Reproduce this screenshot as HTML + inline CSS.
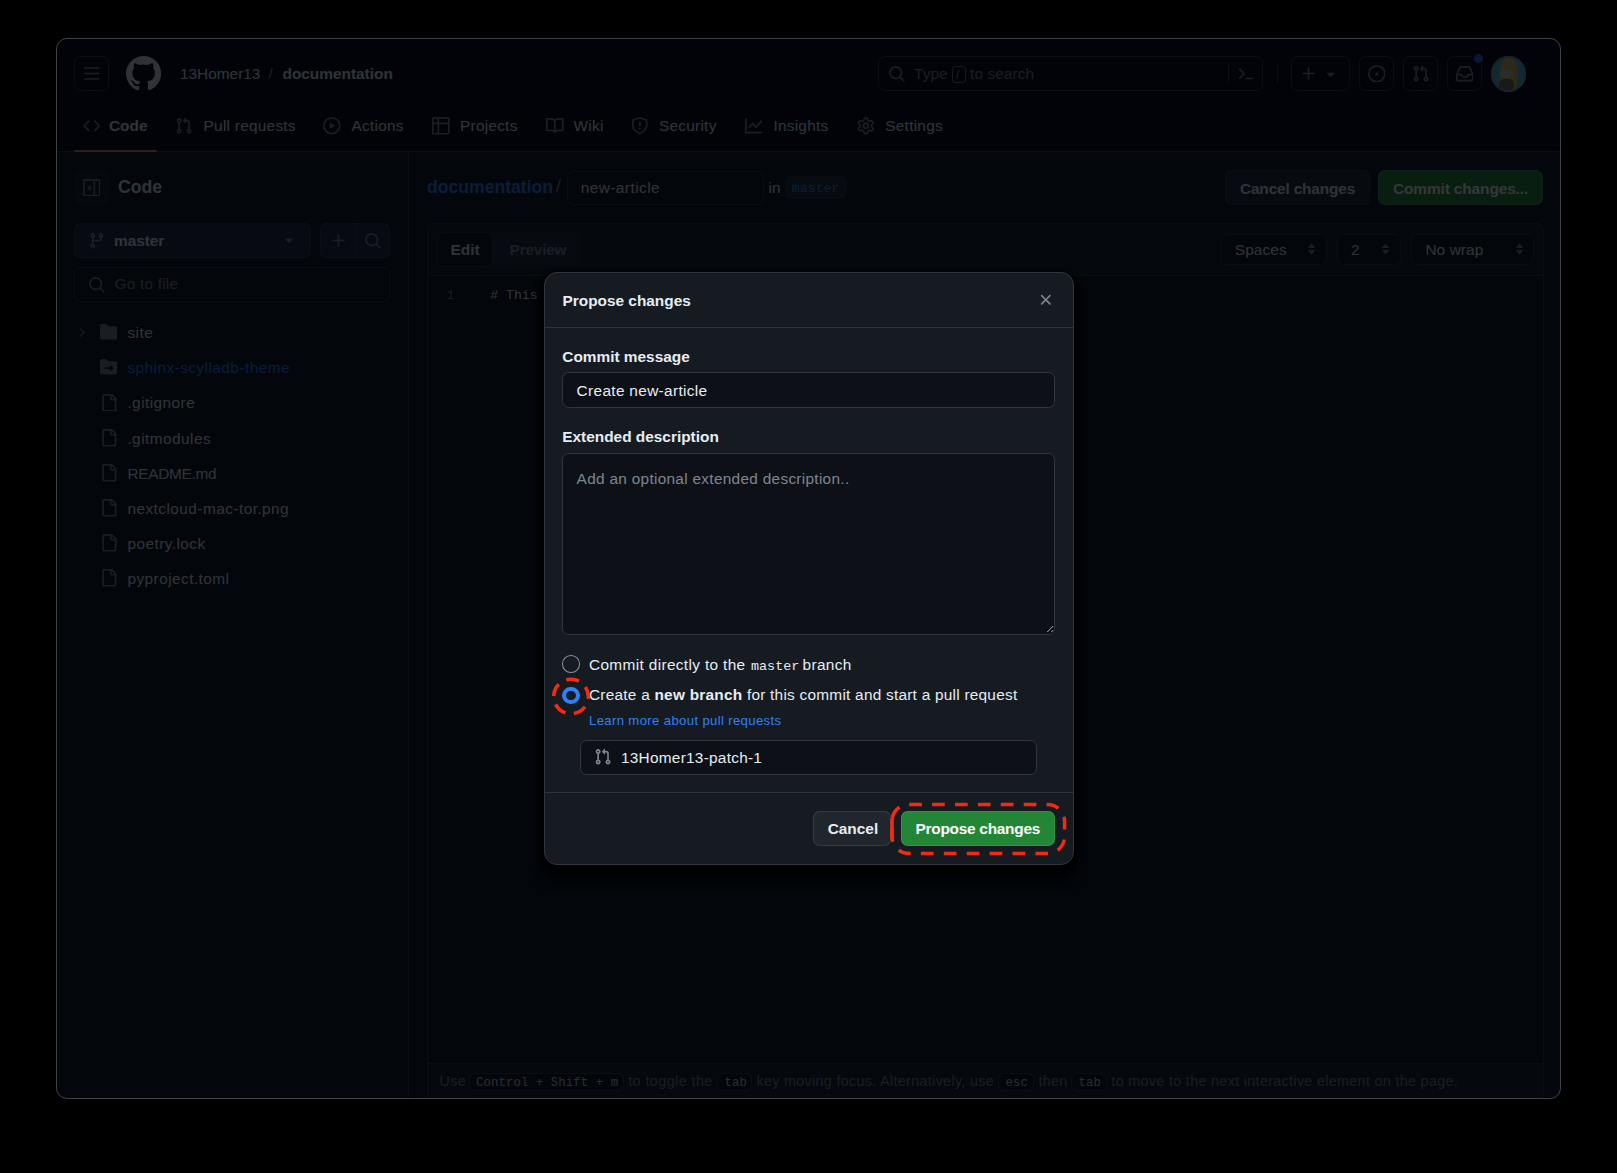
<!DOCTYPE html>
<html><head><meta charset="utf-8"><title>Propose changes</title>
<style>
*{box-sizing:border-box;margin:0;padding:0}
html,body{width:1617px;height:1173px;background:#000;overflow:hidden}
body{position:relative;font-family:"Liberation Sans",sans-serif;color:#e6edf3}
.a{position:absolute}
.t{position:absolute;white-space:nowrap;font-size:15.4px;line-height:15.4px}
.b{font-weight:bold}
.ic{position:absolute}
#page{position:absolute;left:0;top:0;width:1617px;height:1173px;clip-path:inset(38px 56px 74px 56px round 11px)}
#win{position:absolute;left:56px;top:38px;width:1505px;height:1061px;border:1px solid #404145;border-radius:11px}
#dim{position:absolute;left:0;top:0;width:1617px;height:1173px;background:rgba(1,4,9,.8)}
</style></head><body>
<div id="page">
<div class="a" style="left:56px;top:38px;width:1505px;height:113px;background:#010409;border-radius:0px;"></div>
<div class="a" style="left:56px;top:151px;width:1505px;height:1px;background:#30363d;border-radius:0px;"></div>
<div class="a" style="left:56px;top:152px;width:1505px;height:947px;background:#0d1117;border-radius:0px;"></div>
<div class="a" style="left:408px;top:152px;width:1px;height:947px;background:#30363d;border-radius:0px;"></div>
<div class="a" style="left:74px;top:56px;width:35px;height:35px;background:transparent;border:1px solid #30363d;border-radius:6.6px;"></div>
<svg class="ic" style="left:82.7px;top:64.7px;fill:#7d8590;" width="17.6" height="17.6" viewBox="0 0 16 16"><path d="M1 2.75A.75.75 0 0 1 1.75 2h12.5a.75.75 0 0 1 0 1.5H1.75A.75.75 0 0 1 1 2.75Zm0 5A.75.75 0 0 1 1.75 7h12.5a.75.75 0 0 1 0 1.5H1.75A.75.75 0 0 1 1 7.75ZM1.75 12h12.5a.75.75 0 0 1 0 1.5H1.75a.75.75 0 0 1 0-1.5Z"/></svg>
<svg class="ic" style="left:126px;top:56px;fill:#e6edf3;" width="35.2" height="35.2" viewBox="0 0 16 16"><path d="M8 0c4.42 0 8 3.58 8 8a8.013 8.013 0 0 1-5.45 7.59c-.4.08-.55-.17-.55-.38 0-.27.01-1.13.01-2.2 0-.75-.25-1.23-.54-1.48 1.78-.2 3.65-.88 3.65-3.95 0-.88-.31-1.59-.82-2.15.08-.2.36-1.02-.08-2.12 0 0-.67-.22-2.2.82-.64-.18-1.32-.27-2-.27-.68 0-1.36.09-2 .27-1.53-1.03-2.2-.82-2.2-.82-.44 1.1-.16 1.92-.08 2.12-.51.56-.82 1.28-.82 2.15 0 3.06 1.86 3.75 3.64 3.95-.23.2-.44.55-.51 1.07-.46.21-1.61.55-2.33-.66-.15-.24-.6-.83-1.23-.82-.67.01-.27.38.01.53.34.19.73.9.82 1.13.16.45.68 1.31 2.69.94 0 .67.01 1.3.01 1.49 0 .21-.15.45-.55.38A7.995 7.995 0 0 1 0 8c0-4.42 3.58-8 8-8Z"/></svg>
<div class="t " style="left:180px;top:66.06px;font-size:15.4px;line-height:15.4px;letter-spacing:0px;">13Homer13</div>
<div class="t " style="left:268.5px;top:66.06px;font-size:15.4px;line-height:15.4px;color:#7d8590;letter-spacing:0px;">/</div>
<div class="t b" style="left:282.5px;top:66.06px;font-size:15.4px;line-height:15.4px;">documentation</div>
<div class="a" style="left:878px;top:56px;width:385px;height:35px;background:transparent;border:1px solid #30363d;border-radius:6.6px;"></div>
<svg class="ic" style="left:887.5px;top:65px;fill:#7d8590;" width="17.6" height="17.6" viewBox="0 0 16 16"><path d="M10.68 11.74a6 6 0 0 1-7.922-8.982 6 6 0 0 1 8.982 7.922l3.04 3.04a.749.749 0 0 1-.326 1.275.749.749 0 0 1-.734-.215ZM11.5 7a4.499 4.499 0 1 0-8.997 0A4.499 4.499 0 0 0 11.5 7Z"/></svg>
<div class="t " style="left:914px;top:66.06px;font-size:15.4px;line-height:15.4px;color:#7d8590;letter-spacing:0.1px;">Type</div>
<div class="a" style="left:952px;top:66px;width:13.5px;height:17px;background:transparent;border:1px solid #7d8590;border-radius:3.3px;opacity:.9"></div>
<div class="t " style="left:955.8px;top:67.93px;font-size:13.2px;line-height:13.2px;color:#7d8590;letter-spacing:0px;">/</div>
<div class="t " style="left:970px;top:66.06px;font-size:15.4px;line-height:15.4px;color:#7d8590;letter-spacing:0.1px;">to search</div>
<div class="a" style="left:1228px;top:64px;width:1px;height:18px;background:#30363d;border-radius:0px;"></div>
<svg class="ic" style="left:1237px;top:65px" width="17.6" height="17.6" viewBox="0 0 16 16"><path d="M2.5 4 L6.5 8 L2.5 12" fill="none" stroke="#7d8590" stroke-width="1.5" stroke-linecap="round" stroke-linejoin="round"/><path d="M8.5 12.3 H14" stroke="#7d8590" stroke-width="1.5" stroke-linecap="round"/></svg>
<div class="a" style="left:1276.5px;top:62.5px;width:1px;height:20.5px;background:#30363d;border-radius:0px;"></div>
<div class="a" style="left:1291px;top:56px;width:58.5px;height:35px;background:transparent;border:1px solid #30363d;border-radius:6.6px;"></div>
<svg class="ic" style="left:1299.5px;top:64.7px;fill:#7d8590;" width="17.6" height="17.6" viewBox="0 0 16 16"><path d="M7.75 2a.75.75 0 0 1 .75.75V7h4.25a.75.75 0 0 1 0 1.5H8.5v4.25a.75.75 0 0 1-1.5 0V8.5H2.75a.75.75 0 0 1 0-1.5H7V2.75A.75.75 0 0 1 7.75 2Z"/></svg>
<svg class="ic" style="left:1322px;top:65px;fill:#7d8590;" width="17.6" height="17.6" viewBox="0 0 16 16"><path d="m4.427 7.427 3.396 3.396a.25.25 0 0 0 .354 0l3.396-3.396A.25.25 0 0 0 11.396 7H4.604a.25.25 0 0 0-.177.427Z"/></svg>
<div class="a" style="left:1359px;top:56px;width:35px;height:35px;background:transparent;border:1px solid #30363d;border-radius:6.6px;"></div>
<svg class="ic" style="left:1367.7px;top:64.7px;fill:#7d8590;" width="17.6" height="17.6" viewBox="0 0 16 16"><path d="M8 9.5a1.5 1.5 0 1 0 0-3 1.5 1.5 0 0 0 0 3ZM8 0a8 8 0 1 1 0 16A8 8 0 0 1 8 0ZM1.5 8a6.5 6.5 0 1 0 13 0 6.5 6.5 0 0 0-13 0Z"/></svg>
<div class="a" style="left:1403px;top:56px;width:35px;height:35px;background:transparent;border:1px solid #30363d;border-radius:6.6px;"></div>
<svg class="ic" style="left:1411.7px;top:64.7px;fill:#7d8590;" width="17.6" height="17.6" viewBox="0 0 16 16"><path d="M1.5 3.25a2.25 2.25 0 1 1 3 2.122v5.256a2.251 2.251 0 1 1-1.5 0V5.372A2.25 2.25 0 0 1 1.5 3.25Zm5.677-.177L9.573.677A.25.25 0 0 1 10 .854V2.5h1A2.5 2.5 0 0 1 13.5 5v5.628a2.251 2.251 0 1 1-1.5 0V5a1 1 0 0 0-1-1h-1v1.646a.25.25 0 0 1-.427.177L7.177 3.427a.25.25 0 0 1 0-.354ZM3.75 2.5a.75.75 0 1 0 0 1.5.75.75 0 0 0 0-1.5Zm0 9.5a.75.75 0 1 0 0 1.5.75.75 0 0 0 0-1.5Zm8.25.75a.75.75 0 1 0 1.5 0 .75.75 0 0 0-1.5 0Z"/></svg>
<div class="a" style="left:1447px;top:56px;width:35px;height:35px;background:transparent;border:1px solid #30363d;border-radius:6.6px;"></div>
<svg class="ic" style="left:1455.7px;top:64.7px;fill:#7d8590;" width="17.6" height="17.6" viewBox="0 0 16 16"><path d="M2.8 2.06A1.75 1.75 0 0 1 4.41 1h7.18c.7 0 1.333.417 1.61 1.06l2.74 6.395c.04.093.06.194.06.295v4.5A1.75 1.75 0 0 1 14.25 15H1.75A1.75 1.75 0 0 1 0 13.25v-4.5c0-.101.02-.202.06-.295Zm1.61.44a.25.25 0 0 0-.23.152L1.887 8H4.75a.75.75 0 0 1 .6.3L6.625 10h2.75l1.275-1.7a.75.75 0 0 1 .6-.3h2.863L11.82 2.652a.25.25 0 0 0-.23-.152Zm10.09 7h-2.875l-1.275 1.7a.75.75 0 0 1-.6.3h-3.5a.75.75 0 0 1-.6-.3L4.375 9.5H1.5v3.75c0 .138.112.25.25.25h12.5a.25.25 0 0 0 .25-.25Z"/></svg>
<div class="a" style="left:1472px;top:52px;width:13px;height:13px;border-radius:50%;background:#1f6feb;border:2px solid #010409"></div>
<div class="a" style="left:1490.5px;top:56px;width:35.5px;height:35.5px;border-radius:50%;overflow:hidden;background:#58bfe0"><div class="a" style="left:9px;top:2px;width:18px;height:34px;border-radius:45%;background:#d8c046"></div><div class="a" style="left:8px;top:13px;width:14px;height:9px;border-radius:50%;background:#c9cdd0"></div><div class="a" style="left:8px;top:23px;width:15px;height:12px;border-radius:40%;background:#6e6a55"></div><div class="a" style="left:0;top:0;width:35.5px;height:35.5px;border-radius:50%;box-shadow:inset 0 0 0 1.5px #8a8f96"></div></div>
<svg class="ic" style="left:82.5px;top:117.4px;fill:#7d8590;" width="17.6" height="17.6" viewBox="0 0 16 16"><path d="m11.28 3.22 4.25 4.25a.75.75 0 0 1 0 1.06l-4.25 4.25a.749.749 0 0 1-1.275-.326.749.749 0 0 1 .215-.734L13.94 8l-3.72-3.72a.749.749 0 0 1 .326-1.275.749.749 0 0 1 .734.215Zm-6.56 0a.751.751 0 0 1 1.042.018.751.751 0 0 1 .018 1.042L2.06 8l3.72 3.72a.749.749 0 0 1-.326 1.275.749.749 0 0 1-.734-.215L.47 8.53a.75.75 0 0 1 0-1.06Z"/></svg>
<div class="t b" style="left:109px;top:118.16px;font-size:15.4px;line-height:15.4px;letter-spacing:0px;">Code</div>
<svg class="ic" style="left:175px;top:117.4px;fill:#7d8590;" width="17.6" height="17.6" viewBox="0 0 16 16"><path d="M1.5 3.25a2.25 2.25 0 1 1 3 2.122v5.256a2.251 2.251 0 1 1-1.5 0V5.372A2.25 2.25 0 0 1 1.5 3.25Zm5.677-.177L9.573.677A.25.25 0 0 1 10 .854V2.5h1A2.5 2.5 0 0 1 13.5 5v5.628a2.251 2.251 0 1 1-1.5 0V5a1 1 0 0 0-1-1h-1v1.646a.25.25 0 0 1-.427.177L7.177 3.427a.25.25 0 0 1 0-.354ZM3.75 2.5a.75.75 0 1 0 0 1.5.75.75 0 0 0 0-1.5Zm0 9.5a.75.75 0 1 0 0 1.5.75.75 0 0 0 0-1.5Zm8.25.75a.75.75 0 1 0 1.5 0 .75.75 0 0 0-1.5 0Z"/></svg>
<div class="t " style="left:203.6px;top:118.16px;font-size:15.4px;line-height:15.4px;letter-spacing:0.25px;">Pull requests</div>
<svg class="ic" style="left:323px;top:117.4px;fill:#7d8590;" width="17.6" height="17.6" viewBox="0 0 16 16"><path d="M8 0a8 8 0 1 1 0 16A8 8 0 0 1 8 0ZM1.5 8a6.5 6.5 0 1 0 13 0 6.5 6.5 0 0 0-13 0Zm4.879-2.773 4.264 2.559a.25.25 0 0 1 0 .428l-4.264 2.559A.25.25 0 0 1 6 10.559V5.442a.25.25 0 0 1 .379-.215Z"/></svg>
<div class="t " style="left:351.6px;top:118.16px;font-size:15.4px;line-height:15.4px;letter-spacing:0.25px;">Actions</div>
<svg class="ic" style="left:432px;top:117.4px;fill:#7d8590;" width="17.6" height="17.6" viewBox="0 0 16 16"><path d="M0 1.75C0 .784.784 0 1.75 0h12.5C15.216 0 16 .784 16 1.75v12.5A1.75 1.75 0 0 1 14.25 16H1.750A1.75 1.75 0 0 1 0 14.25ZM6.5 6.5v8h7.75a.25.25 0 0 0 .25-.25V6.5Zm8-1.5V1.75a.25.25 0 0 0-.25-.25H6.5V5Zm-13 1.5v7.75c0 .138.112.25.25.25H5v-8ZM5 5V1.5H1.75a.25.25 0 0 0-.25.25V5Z"/></svg>
<div class="t " style="left:460px;top:118.16px;font-size:15.4px;line-height:15.4px;letter-spacing:0.25px;">Projects</div>
<svg class="ic" style="left:546.3px;top:117.4px;fill:#7d8590;" width="17.6" height="17.6" viewBox="0 0 16 16"><path d="M0 1.75A.75.75 0 0 1 .75 1h4.253c1.227 0 2.317.59 3 1.501A3.743 3.743 0 0 1 11.006 1h4.245a.75.75 0 0 1 .75.75v10.5a.75.75 0 0 1-.75.75h-4.507a2.25 2.25 0 0 0-1.591.659l-.622.621a.75.75 0 0 1-1.06 0l-.622-.621A2.25 2.25 0 0 0 5.258 13H.75a.75.75 0 0 1-.75-.75Zm7.251 10.324.004-5.073-.002-2.253A2.25 2.25 0 0 0 5.003 2.5H1.5v9h3.757a3.75 3.75 0 0 1 1.994.574ZM8.755 4.75l-.004 7.322a3.752 3.752 0 0 1 1.992-.572H14.5v-9h-3.495a2.25 2.25 0 0 0-2.250 2.25Z"/></svg>
<div class="t " style="left:573.6px;top:118.16px;font-size:15.4px;line-height:15.4px;letter-spacing:0.25px;">Wiki</div>
<svg class="ic" style="left:631px;top:117.4px;fill:#7d8590;" width="17.6" height="17.6" viewBox="0 0 16 16"><path d="M7.467.133a1.748 1.748 0 0 1 1.066 0l5.25 1.68A1.75 1.75 0 0 1 15 3.48V7c0 1.566-.32 3.182-1.303 4.682-.983 1.498-2.585 2.813-5.032 3.855a1.697 1.697 0 0 1-1.33 0c-2.447-1.042-4.049-2.357-5.032-3.855C1.32 10.182 1 8.566 1 7V3.48a1.755 1.755 0 0 1 1.217-1.667Zm.61 1.429a.25.25 0 0 0-.153 0l-5.25 1.68a.25.25 0 0 0-.174.238V7c0 1.358.275 2.666 1.057 3.86.784 1.194 2.121 2.34 4.366 3.297a.196.196 0 0 0 .154 0c2.245-.956 3.582-2.104 4.366-3.298C13.225 9.666 13.5 8.36 13.5 7V3.48a.251.251 0 0 0-.174-.237l-5.25-1.68ZM8.75 4.75v3a.75.75 0 0 1-1.5 0v-3a.75.75 0 0 1 1.5 0ZM9 10.5a1 1 0 1 1-2 0 1 1 0 0 1 2 0Z"/></svg>
<div class="t " style="left:659px;top:118.16px;font-size:15.4px;line-height:15.4px;letter-spacing:0.25px;">Security</div>
<svg class="ic" style="left:744.6px;top:117.4px;fill:#7d8590;" width="17.6" height="17.6" viewBox="0 0 16 16"><path d="M1.5 1.75V13.5h13.75a.75.75 0 0 1 0 1.5H.75a.75.75 0 0 1-.75-.75V1.75a.75.75 0 0 1 1.5 0Zm14.28 2.53-5.25 5.25a.75.75 0 0 1-1.06 0L7 7.06 4.28 9.78a.751.751 0 0 1-1.042-.018.751.751 0 0 1-.018-1.042l3.25-3.25a.75.75 0 0 1 1.06 0L10 7.94l4.72-4.72a.751.751 0 0 1 1.042.018.751.751 0 0 1 .018 1.042Z"/></svg>
<div class="t " style="left:773.4px;top:118.16px;font-size:15.4px;line-height:15.4px;letter-spacing:0.25px;">Insights</div>
<svg class="ic" style="left:857px;top:117.4px;fill:#7d8590;" width="17.6" height="17.6" viewBox="0 0 16 16"><path d="M8 0a8.2 8.2 0 0 1 .701.031C9.444.095 9.99.645 10.16 1.29l.288 1.107c.018.066.079.158.212.224.231.114.454.243.668.386.123.082.233.09.299.071l1.103-.303c.644-.176 1.392.021 1.82.63.27.385.506.792.704 1.218.315.675.111 1.422-.364 1.891l-.814.806c-.049.048-.098.147-.088.294.016.257.016.515 0 .772-.01.147.038.246.088.294l.814.806c.475.469.679 1.216.364 1.891a7.977 7.977 0 0 1-.704 1.217c-.428.61-1.176.807-1.82.63l-1.102-.302c-.067-.019-.177-.011-.3.071a5.909 5.909 0 0 1-.668.386c-.133.066-.194.158-.211.224l-.29 1.106c-.168.646-.715 1.196-1.458 1.26a8.006 8.006 0 0 1-1.402 0c-.743-.064-1.289-.614-1.458-1.26l-.289-1.106c-.018-.066-.079-.158-.212-.224a5.738 5.738 0 0 1-.668-.386c-.123-.082-.233-.09-.299-.071l-1.103.303c-.644.176-1.392-.021-1.82-.63a8.12 8.12 0 0 1-.704-1.218c-.315-.675-.111-1.422.363-1.891l.815-.806c.05-.048.098-.147.088-.294a6.214 6.214 0 0 1 0-.772c.01-.147-.038-.246-.088-.294l-.815-.806C.635 6.045.431 5.298.746 4.623a7.92 7.92 0 0 1 .704-1.217c.428-.61 1.176-.807 1.82-.63l1.102.302c.067.019.177.011.3-.071.214-.143.437-.272.668-.386.133-.066.194-.158.211-.224l.29-1.106C6.009.645 6.556.095 7.299.03 7.530.01 7.764 0 8 0Zm-.571 1.525c-.036.003-.108.036-.137.146l-.289 1.105c-.147.561-.549.967-.998 1.189-.173.086-.34.183-.5.29-.417.278-.97.423-1.529.27l-1.103-.303c-.109-.03-.175.016-.195.045-.22.312-.412.644-.573.99-.014.031-.021.11.059.19l.815.806c.411.406.562.957.53 1.456a4.709 4.709 0 0 0 0 .582c.032.499-.119 1.05-.53 1.456l-.815.806c-.081.08-.073.159-.059.19.162.346.353.677.573.989.02.03.085.076.195.046l1.102-.303c.56-.153 1.113-.008 1.53.27.161.107.328.204.501.29.447.222.85.629.997 1.189l.289 1.105c.029.109.101.143.137.146a6.6 6.6 0 0 0 1.142 0c.036-.003.108-.036.137-.146l.289-1.105c.147-.561.549-.967.998-1.189.173-.086.34-.183.5-.29.417-.278.97-.423 1.529-.27l1.103.303c.109.029.175-.016.195-.045.22-.313.411-.644.573-.99.014-.031.021-.11-.059-.19l-.815-.806c-.411-.406-.562-.957-.53-1.456a4.709 4.709 0 0 0 0-.582c-.032-.499.119-1.05.53-1.456l.815-.806c.081-.08.073-.159.059-.19a6.464 6.464 0 0 0-.573-.989c-.02-.03-.085-.076-.195-.046l-1.102.303c-.56.153-1.113.008-1.53-.27a4.44 4.44 0 0 0-.501-.29c-.447-.222-.85-.629-.997-1.189l-.289-1.105c-.029-.11-.101-.143-.137-.146a6.6 6.6 0 0 0-1.142 0ZM11 8a3 3 0 1 1-6 0 3 3 0 0 1 6 0ZM9.5 8a1.5 1.5 0 1 0-3.001.001A1.5 1.5 0 0 0 9.5 8Z"/></svg>
<div class="t " style="left:885.3px;top:118.16px;font-size:15.4px;line-height:15.4px;letter-spacing:0.25px;">Settings</div>
<div class="a" style="left:74px;top:149.5px;width:82.5px;height:2.2px;background:#f78166;border-radius:1px;"></div>
<div class="a" style="left:74.5px;top:170px;width:34px;height:34.5px;background:#161b22;border-radius:6.6px;"></div>
<svg class="ic" style="left:82.5px;top:178.5px;fill:#7d8590;" width="17.6" height="17.6" viewBox="0 0 16 16"><path d="M4.177 7.823 6.573 5.427A.25.25 0 0 1 7 5.604v4.792a.25.25 0 0 1-.427.177L4.177 8.177a.25.25 0 0 1 0-.354ZM1.75 0h12.5C15.216 0 16 .784 16 1.75v12.5A1.75 1.75 0 0 1 14.25 16H1.75A1.75 1.75 0 0 1 0 14.25V1.75C0 .784.784 0 1.75 0ZM1.5 1.75v12.5c0 .138.112.25.25.25H9.5v-13H1.75a.25.25 0 0 0-.25.25ZM11 14.5h3.25a.25.25 0 0 0 .25-.25V1.75a.25.25 0 0 0-.25-.25H11Z"/></svg>
<div class="t b" style="left:118px;top:178.50px;font-size:17.6px;line-height:17.6px;">Code</div>
<div class="a" style="left:74px;top:223px;width:237px;height:35px;background:#21262d;border:1px solid rgba(240,246,252,0.1);border-radius:6.6px;"></div>
<svg class="ic" style="left:87.7px;top:232px;fill:#7d8590;" width="17.6" height="17.6" viewBox="0 0 16 16"><path d="M9.5 3.25a2.25 2.25 0 1 1 3 2.122V6A2.5 2.5 0 0 1 10 8.5H6a1 1 0 0 0-1 1v1.128a2.251 2.251 0 1 1-1.5 0V5.372a2.25 2.25 0 1 1 1.5 0v1.836A2.493 2.493 0 0 1 6 7h4a1 1 0 0 0 1-1v-.628A2.25 2.25 0 0 1 9.5 3.25Zm-6 0a.75.75 0 1 0 1.5 0 .75.75 0 0 0-1.5 0Zm8.25-.75a.75.75 0 1 0 0 1.5.75.75 0 0 0 0-1.5ZM4.25 12a.75.75 0 1 0 0 1.5.75.75 0 0 0 0-1.5Z"/></svg>
<div class="t b" style="left:114px;top:232.96px;font-size:15.4px;line-height:15.4px;letter-spacing:-0.05px;">master</div>
<svg class="ic" style="left:279.5px;top:231px;fill:#7d8590;" width="17.6" height="17.6" viewBox="0 0 16 16"><path d="m4.427 7.427 3.396 3.396a.25.25 0 0 0 .354 0l3.396-3.396A.25.25 0 0 0 11.396 7H4.604a.25.25 0 0 0-.177.427Z"/></svg>
<div class="a" style="left:320px;top:223px;width:70px;height:35px;background:#21262d;border:1px solid rgba(240,246,252,0.1);border-radius:6.6px;"></div>
<div class="a" style="left:355px;top:223px;width:1px;height:35px;background:rgba(240,246,252,0.1);border-radius:0px;"></div>
<svg class="ic" style="left:329.5px;top:232px;fill:#7d8590;" width="17.6" height="17.6" viewBox="0 0 16 16"><path d="M7.75 2a.75.75 0 0 1 .75.75V7h4.25a.75.75 0 0 1 0 1.5H8.5v4.25a.75.75 0 0 1-1.5 0V8.5H2.75a.75.75 0 0 1 0-1.5H7V2.75A.75.75 0 0 1 7.75 2Z"/></svg>
<svg class="ic" style="left:364px;top:232px;fill:#7d8590;" width="17.6" height="17.6" viewBox="0 0 16 16"><path d="M10.68 11.74a6 6 0 0 1-7.922-8.982 6 6 0 0 1 8.982 7.922l3.04 3.04a.749.749 0 0 1-.326 1.275.749.749 0 0 1-.734-.215ZM11.5 7a4.499 4.499 0 1 0-8.997 0A4.499 4.499 0 0 0 11.5 7Z"/></svg>
<div class="a" style="left:74px;top:267px;width:316px;height:35px;background:#0d1117;border:1px solid #30363d;border-radius:6.6px;"></div>
<svg class="ic" style="left:87.8px;top:276px;fill:#7d8590;" width="17.6" height="17.6" viewBox="0 0 16 16"><path d="M10.68 11.74a6 6 0 0 1-7.922-8.982 6 6 0 0 1 8.982 7.922l3.04 3.04a.749.749 0 0 1-.326 1.275.749.749 0 0 1-.734-.215ZM11.5 7a4.499 4.499 0 1 0-8.997 0A4.499 4.499 0 0 0 11.5 7Z"/></svg>
<div class="t " style="left:114.6px;top:276.46px;font-size:15.4px;line-height:15.4px;color:#7d8590;letter-spacing:0.2px;">Go to file</div>
<svg class="ic" style="left:99.8px;top:323.4px;fill:#7d8590;" width="17.6" height="17.6" viewBox="0 0 16 16"><path d="M0 2.75C0 1.784.784 1 1.75 1H5c.55 0 1.07.26 1.4.7l.9 1.2a.25.25 0 0 0 .2.1h6.75c.966 0 1.75.784 1.75 1.75v8.5A1.75 1.75 0 0 1 14.25 15H1.75A1.75 1.75 0 0 1 0 13.25Z"/></svg>
<div class="t " style="left:127.4px;top:324.96px;font-size:15.4px;line-height:15.4px;color:#e6edf3;letter-spacing:0.45px;">site</div>
<svg class="ic" style="left:99.8px;top:358.29999999999995px;fill:#7d8590;" width="17.6" height="17.6" viewBox="0 0 16 16"><path d="M0 2.75C0 1.784.784 1 1.75 1H5c.55 0 1.07.26 1.4.7l.9 1.2a.25.25 0 0 0 .2.1h6.75c.966 0 1.75.784 1.75 1.75v8.5A1.75 1.75 0 0 1 14.25 15H1.75A1.75 1.75 0 0 1 0 13.25Zm9.42 9.36 2.883-2.677a.25.25 0 0 0 0-.366L9.42 6.39a.249.249 0 0 0-.42.183V8.5H4.75a.75.75 0 0 0 0 1.5H9v1.927c0 .218.26.331.42.183Z"/></svg>
<div class="t " style="left:127.4px;top:359.86px;font-size:15.4px;line-height:15.4px;color:#2f81f7;letter-spacing:0.45px;">sphinx-scylladb-theme</div>
<svg class="ic" style="left:99.5px;top:393.5px;fill:#7d8590;" width="17.6" height="17.6" viewBox="0 0 16 16"><path d="M2 1.75C2 .784 2.784 0 3.75 0h6.586c.464 0 .909.184 1.237.513l2.914 2.914c.329.328.513.773.513 1.237v9.586A1.75 1.75 0 0 1 13.25 16h-9.5A1.75 1.75 0 0 1 2 14.25Zm1.75-.25a.25.25 0 0 0-.25.25v12.5c0 .138.112.25.25.25h9.5a.25.25 0 0 0 .25-.25V6h-2.75A1.75 1.75 0 0 1 9 4.25V1.5Zm6.75.062V4.25c0 .138.112.25.25.25h2.688l-.011-.013-2.914-2.914-.013-.011Z"/></svg>
<div class="t " style="left:127.4px;top:395.06px;font-size:15.4px;line-height:15.4px;color:#e6edf3;letter-spacing:0.45px;">.gitignore</div>
<svg class="ic" style="left:99.5px;top:429.0px;fill:#7d8590;" width="17.6" height="17.6" viewBox="0 0 16 16"><path d="M2 1.75C2 .784 2.784 0 3.75 0h6.586c.464 0 .909.184 1.237.513l2.914 2.914c.329.328.513.773.513 1.237v9.586A1.75 1.75 0 0 1 13.25 16h-9.5A1.75 1.75 0 0 1 2 14.25Zm1.75-.25a.25.25 0 0 0-.25.25v12.5c0 .138.112.25.25.25h9.5a.25.25 0 0 0 .25-.25V6h-2.75A1.75 1.75 0 0 1 9 4.25V1.5Zm6.75.062V4.25c0 .138.112.25.25.25h2.688l-.011-.013-2.914-2.914-.013-.011Z"/></svg>
<div class="t " style="left:127.4px;top:430.56px;font-size:15.4px;line-height:15.4px;color:#e6edf3;letter-spacing:0.45px;">.gitmodules</div>
<svg class="ic" style="left:99.5px;top:464.0px;fill:#7d8590;" width="17.6" height="17.6" viewBox="0 0 16 16"><path d="M2 1.75C2 .784 2.784 0 3.75 0h6.586c.464 0 .909.184 1.237.513l2.914 2.914c.329.328.513.773.513 1.237v9.586A1.75 1.75 0 0 1 13.25 16h-9.5A1.75 1.75 0 0 1 2 14.25Zm1.75-.25a.25.25 0 0 0-.25.25v12.5c0 .138.112.25.25.25h9.5a.25.25 0 0 0 .25-.25V6h-2.75A1.75 1.75 0 0 1 9 4.25V1.5Zm6.75.062V4.25c0 .138.112.25.25.25h2.688l-.011-.013-2.914-2.914-.013-.011Z"/></svg>
<div class="t " style="left:127.4px;top:465.56px;font-size:15.4px;line-height:15.4px;color:#e6edf3;letter-spacing:-0.3px;">README.md</div>
<svg class="ic" style="left:99.5px;top:499.1px;fill:#7d8590;" width="17.6" height="17.6" viewBox="0 0 16 16"><path d="M2 1.75C2 .784 2.784 0 3.75 0h6.586c.464 0 .909.184 1.237.513l2.914 2.914c.329.328.513.773.513 1.237v9.586A1.75 1.75 0 0 1 13.25 16h-9.5A1.75 1.75 0 0 1 2 14.25Zm1.75-.25a.25.25 0 0 0-.25.25v12.5c0 .138.112.25.25.25h9.5a.25.25 0 0 0 .25-.25V6h-2.75A1.75 1.75 0 0 1 9 4.25V1.5Zm6.75.062V4.25c0 .138.112.25.25.25h2.688l-.011-.013-2.914-2.914-.013-.011Z"/></svg>
<div class="t " style="left:127.4px;top:500.66px;font-size:15.4px;line-height:15.4px;color:#e6edf3;letter-spacing:0.45px;">nextcloud-mac-tor.png</div>
<svg class="ic" style="left:99.5px;top:534.1px;fill:#7d8590;" width="17.6" height="17.6" viewBox="0 0 16 16"><path d="M2 1.75C2 .784 2.784 0 3.75 0h6.586c.464 0 .909.184 1.237.513l2.914 2.914c.329.328.513.773.513 1.237v9.586A1.75 1.75 0 0 1 13.25 16h-9.5A1.75 1.75 0 0 1 2 14.25Zm1.75-.25a.25.25 0 0 0-.25.25v12.5c0 .138.112.25.25.25h9.5a.25.25 0 0 0 .25-.25V6h-2.75A1.75 1.75 0 0 1 9 4.25V1.5Zm6.75.062V4.25c0 .138.112.25.25.25h2.688l-.011-.013-2.914-2.914-.013-.011Z"/></svg>
<div class="t " style="left:127.4px;top:535.66px;font-size:15.4px;line-height:15.4px;color:#e6edf3;letter-spacing:0.45px;">poetry.lock</div>
<svg class="ic" style="left:99.5px;top:569.1999999999999px;fill:#7d8590;" width="17.6" height="17.6" viewBox="0 0 16 16"><path d="M2 1.75C2 .784 2.784 0 3.75 0h6.586c.464 0 .909.184 1.237.513l2.914 2.914c.329.328.513.773.513 1.237v9.586A1.75 1.75 0 0 1 13.25 16h-9.5A1.75 1.75 0 0 1 2 14.25Zm1.75-.25a.25.25 0 0 0-.25.25v12.5c0 .138.112.25.25.25h9.5a.25.25 0 0 0 .25-.25V6h-2.75A1.75 1.75 0 0 1 9 4.25V1.5Zm6.75.062V4.25c0 .138.112.25.25.25h2.688l-.011-.013-2.914-2.914-.013-.011Z"/></svg>
<div class="t " style="left:127.4px;top:570.76px;font-size:15.4px;line-height:15.4px;color:#e6edf3;letter-spacing:0.45px;">pyproject.toml</div>
<svg class="ic" style="left:74.8px;top:326.2px;fill:#7d8590;" width="13.2" height="13.2" viewBox="0 0 16 16"><path d="M6.22 3.22a.75.75 0 0 1 1.06 0l4.25 4.25a.75.75 0 0 1 0 1.06l-4.25 4.25a.751.751 0 0 1-1.042-.018.751.751 0 0 1-.018-1.042L9.94 8 6.22 4.28a.75.75 0 0 1 0-1.06Z"/></svg>
<div class="t b" style="left:427px;top:179.30px;font-size:17.6px;line-height:17.6px;color:#2f81f7;">documentation</div>
<div class="t " style="left:556px;top:177.60px;font-size:17.6px;line-height:17.6px;color:#7d8590;letter-spacing:0px;">/</div>
<div class="a" style="left:566.5px;top:170.5px;width:197px;height:34.5px;background:#0d1117;border:1px solid #30363d;border-radius:6.6px;"></div>
<div class="t " style="left:580.7px;top:180.16px;font-size:15.4px;line-height:15.4px;letter-spacing:0.45px;">new-article</div>
<div class="t " style="left:768.5px;top:180.16px;font-size:15.4px;line-height:15.4px;letter-spacing:0px;">in</div>
<div class="a" style="left:785px;top:176px;width:62px;height:23px;background:rgba(110,118,129,0.25);border-radius:6px;"></div>
<div class="t" style="left:791.8px;top:181.88px;font-size:13.2px;line-height:13.2px;font-family:'Liberation Mono',monospace;letter-spacing:0.05px;color:#2f81f7;">master</div>
<div class="a" style="left:1225px;top:170.3px;width:145px;height:34.5px;background:#21262d;border:1px solid rgba(240,246,252,0.1);border-radius:6.6px;"></div>
<div class="t b" style="left:1240px;top:180.86px;font-size:15.4px;line-height:15.4px;letter-spacing:-0.15px;">Cancel changes</div>
<div class="a" style="left:1378px;top:170.3px;width:165px;height:34.5px;background:#238636;border:1px solid rgba(240,246,252,0.1);border-radius:6.6px;"></div>
<div class="t b" style="left:1393px;top:180.86px;font-size:15.4px;line-height:15.4px;color:#ffffff;letter-spacing:-0.1px;">Commit changes...</div>
<div class="a" style="left:427px;top:223px;width:1117px;height:900px;background:#0d1117;border:1px solid #30363d;border-radius:6.6px;"></div>
<div class="a" style="left:428px;top:224px;width:1115px;height:51.5px;background:#161b22;border-radius:0px;border-top-left-radius:6px;border-top-right-radius:6px"></div>
<div class="a" style="left:428px;top:275.2px;width:1115px;height:1px;background:#30363d;border-radius:0px;"></div>
<div class="a" style="left:436.5px;top:232.3px;width:143.5px;height:34.5px;background:#21262d;border-radius:6.6px;"></div>
<div class="a" style="left:436.5px;top:232.3px;width:56.5px;height:34.5px;background:#0d1117;border:1px solid #30363d;border-radius:6.6px;"></div>
<div class="t b" style="left:450.6px;top:241.86px;font-size:15.4px;line-height:15.4px;">Edit</div>
<div class="t b" style="left:509.6px;top:241.86px;font-size:15.4px;line-height:15.4px;color:#7d8590;letter-spacing:-0.2px;">Preview</div>
<div class="a" style="left:1220.5px;top:233.7px;width:106px;height:31.6px;background:#0d1117;border:1px solid #30363d;border-radius:6.6px;"></div>
<div class="t " style="left:1234.8px;top:241.96px;font-size:15.4px;line-height:15.4px;letter-spacing:0.1px;">Spaces</div>
<svg class="ic" style="left:1306px;top:242px" width="11" height="14" viewBox="0 0 11 14"><path d="M5.5 1.5 L9.3 6 H1.7Z M5.5 12.5 L9.3 8 H1.7Z" fill="#7d8590"/></svg>
<div class="a" style="left:1336.5px;top:233.7px;width:64.5px;height:31.6px;background:#0d1117;border:1px solid #30363d;border-radius:6.6px;"></div>
<div class="t " style="left:1351px;top:241.96px;font-size:15.4px;line-height:15.4px;letter-spacing:0.1px;">2</div>
<svg class="ic" style="left:1380px;top:242px" width="11" height="14" viewBox="0 0 11 14"><path d="M5.5 1.5 L9.3 6 H1.7Z M5.5 12.5 L9.3 8 H1.7Z" fill="#7d8590"/></svg>
<div class="a" style="left:1410.5px;top:233.7px;width:123px;height:31.6px;background:#0d1117;border:1px solid #30363d;border-radius:6.6px;"></div>
<div class="t " style="left:1425.4px;top:241.96px;font-size:15.4px;line-height:15.4px;letter-spacing:0.1px;">No wrap</div>
<svg class="ic" style="left:1514px;top:242px" width="11" height="14" viewBox="0 0 11 14"><path d="M5.5 1.5 L9.3 6 H1.7Z M5.5 12.5 L9.3 8 H1.7Z" fill="#7d8590"/></svg>
<div class="t" style="left:446.4px;top:288.58px;font-size:13.2px;line-height:13.2px;font-family:'Liberation Mono',monospace;letter-spacing:0px;color:#6e7681;">1</div>
<div class="t" style="left:490.2px;top:288.58px;font-size:13.2px;line-height:13.2px;font-family:'Liberation Mono',monospace;letter-spacing:0px;color:#e6edf3;"># This</div>
<div class="a" style="left:428px;top:1063px;width:1115px;height:40px;background:#161b22;border-radius:0px;"></div>
<div class="a" style="left:428px;top:1063px;width:1115px;height:1px;background:#30363d;border-radius:0px;"></div>
<div class="t " style="left:439.6px;top:1074.40px;font-size:14.3px;line-height:14.3px;color:#7d8590;letter-spacing:0.34px;">Use</div>
<div class="a" style="left:469.0px;top:1072.6px;width:154.7px;height:18.5px;background:#0d1117;border:1px solid #30363d;border-radius:6px;"></div>
<div class="t" style="left:476px;top:1076.87px;font-size:12.3px;line-height:12.3px;font-family:'Liberation Mono',monospace;letter-spacing:0.1px;color:#c9d1d9;">Control + Shift + m</div>
<div class="t " style="left:628.2px;top:1074.40px;font-size:14.3px;line-height:14.3px;color:#7d8590;letter-spacing:0.45px;">to toggle the</div>
<div class="a" style="left:716.8000000000001px;top:1072.6px;width:35px;height:18.5px;background:#0d1117;border:1px solid #30363d;border-radius:6px;"></div>
<div class="t" style="left:724.5px;top:1076.87px;font-size:12.3px;line-height:12.3px;font-family:'Liberation Mono',monospace;letter-spacing:0.1px;color:#c9d1d9;">tab</div>
<div class="t " style="left:756.4px;top:1074.40px;font-size:14.3px;line-height:14.3px;color:#7d8590;letter-spacing:0.34px;">key moving focus. Alternatively, use</div>
<div class="a" style="left:998.0px;top:1072.6px;width:35.6px;height:18.5px;background:#0d1117;border:1px solid #30363d;border-radius:6px;"></div>
<div class="t" style="left:1005.5px;top:1076.87px;font-size:12.3px;line-height:12.3px;font-family:'Liberation Mono',monospace;letter-spacing:0.1px;color:#c9d1d9;">esc</div>
<div class="t " style="left:1038.4px;top:1074.40px;font-size:14.3px;line-height:14.3px;color:#7d8590;letter-spacing:0.34px;">then</div>
<div class="a" style="left:1071.0px;top:1072.6px;width:35.6px;height:18.5px;background:#0d1117;border:1px solid #30363d;border-radius:6px;"></div>
<div class="t" style="left:1078.5px;top:1076.87px;font-size:12.3px;line-height:12.3px;font-family:'Liberation Mono',monospace;letter-spacing:0.1px;color:#c9d1d9;">tab</div>
<div class="t " style="left:1111.4px;top:1074.40px;font-size:14.3px;line-height:14.3px;color:#7d8590;letter-spacing:0.34px;">to move to the next interactive element on the page.</div>
<div id="dim"></div>
<div class="a" style="left:544px;top:272px;width:530px;height:593px;background:#161b22;border:1px solid #30363d;border-radius:13px;box-shadow:0 3px 5px 4px rgba(0,0,0,.85),0 14px 10px 3px rgba(0,0,0,.55)"></div>
<div class="a" style="left:545px;top:327px;width:528px;height:1px;background:#30363d;border-radius:0px;"></div>
<div class="t b" style="left:562.5px;top:292.86px;font-size:15.4px;line-height:15.4px;">Propose changes</div>
<svg class="ic" style="left:1037.2px;top:291.4px;fill:#7d8590;" width="17.6" height="17.6" viewBox="0 0 16 16"><path d="M3.72 3.72a.75.75 0 0 1 1.06 0L8 6.94l3.22-3.22a.749.749 0 0 1 1.275.326.749.749 0 0 1-.215.734L9.06 8l3.22 3.22a.749.749 0 0 1-.326 1.275.749.749 0 0 1-.734-.215L8 9.06l-3.22 3.22a.751.751 0 0 1-1.042-.018.751.751 0 0 1-.018-1.042L6.94 8 3.72 4.78a.75.75 0 0 1 0-1.06Z"/></svg>
<div class="t b" style="left:562.3px;top:349.06px;font-size:15.4px;line-height:15.4px;">Commit message</div>
<div class="a" style="left:562.3px;top:372.2px;width:492.5px;height:35.5px;background:#0d1117;border:1px solid #30363d;border-radius:6.6px;"></div>
<div class="t " style="left:576.6px;top:383.06px;font-size:15.4px;line-height:15.4px;letter-spacing:0.33px;">Create new-article</div>
<div class="t b" style="left:562.3px;top:428.96px;font-size:15.4px;line-height:15.4px;">Extended description</div>
<div class="a" style="left:562.3px;top:453.2px;width:492.5px;height:181.5px;background:#0d1117;border:1px solid #30363d;border-radius:6.6px;"></div>
<div class="t " style="left:576.6px;top:471.36px;font-size:15.4px;line-height:15.4px;color:#7d8590;letter-spacing:0.29px;">Add an optional extended description..</div>
<svg class="a" style="left:1044.5px;top:624.3px" width="10" height="10" viewBox="0 0 10 10"><path d="M8 2.3 L2.5 7.8 M8 6.3 L6.5 7.8" stroke="#000" stroke-width="2.2" stroke-linecap="round"/><path d="M8 2.3 L2.5 7.8 M8 6.3 L6.5 7.8" stroke="#c0c4ca" stroke-width="1" stroke-linecap="round"/></svg>
<div class="a" style="left:562px;top:655px;width:18px;height:17.5px;border-radius:50%;border:1px solid #8b949e"></div>
<div class="t " style="left:589px;top:657.16px;font-size:15.4px;line-height:15.4px;letter-spacing:0.35px;">Commit directly to the</div>
<div class="t" style="left:750.9px;top:659.93px;font-size:13.4px;line-height:13.4px;font-family:'Liberation Mono',monospace;letter-spacing:0.05px;color:#e6edf3;">master</div>
<div class="t " style="left:802.5px;top:657.16px;font-size:15.4px;line-height:15.4px;letter-spacing:0.35px;">branch</div>
<div class="a" style="left:562px;top:686.8px;width:18px;height:17.5px;border-radius:50%;border:4.3px solid #2f81f7"></div>
<div class="t " style="left:589px;top:687.46px;font-size:15.4px;line-height:15.4px;letter-spacing:0.24px;">Create a <b>new branch</b> for this commit and start a pull request</div>
<div class="t " style="left:589px;top:713.63px;font-size:13.2px;line-height:13.2px;color:#2f81f7;letter-spacing:0.33px;">Learn more about pull requests</div>
<div class="a" style="left:580px;top:740px;width:457px;height:34.5px;background:#0d1117;border:1px solid #30363d;border-radius:6.6px;"></div>
<svg class="ic" style="left:594px;top:748px;fill:#7d8590;" width="17.6" height="17.6" viewBox="0 0 16 16"><path d="M1.5 3.25a2.25 2.25 0 1 1 3 2.122v5.256a2.251 2.251 0 1 1-1.5 0V5.372A2.25 2.25 0 0 1 1.5 3.25Zm5.677-.177L9.573.677A.25.25 0 0 1 10 .854V2.5h1A2.5 2.5 0 0 1 13.5 5v5.628a2.251 2.251 0 1 1-1.5 0V5a1 1 0 0 0-1-1h-1v1.646a.25.25 0 0 1-.427.177L7.177 3.427a.25.25 0 0 1 0-.354ZM3.75 2.5a.75.75 0 1 0 0 1.5.75.75 0 0 0 0-1.5Zm0 9.5a.75.75 0 1 0 0 1.5.75.75 0 0 0 0-1.5Zm8.25.75a.75.75 0 1 0 1.5 0 .75.75 0 0 0-1.5 0Z"/></svg>
<div class="t " style="left:621px;top:750.36px;font-size:15.4px;line-height:15.4px;letter-spacing:0.25px;">13Homer13-patch-1</div>
<div class="a" style="left:545px;top:792px;width:528px;height:1px;background:#30363d;border-radius:0px;"></div>
<div class="a" style="left:813.3px;top:811px;width:78.2px;height:35px;background:#21262d;border:1px solid rgba(240,246,252,0.1);border-radius:6.6px;"></div>
<div class="t b" style="left:827.7px;top:820.96px;font-size:15.4px;line-height:15.4px;">Cancel</div>
<div class="a" style="left:901px;top:811px;width:154px;height:35px;background:#238636;border:1px solid rgba(240,246,252,0.1);border-radius:6.6px;"></div>
<div class="t b" style="left:915.5px;top:820.96px;font-size:15.4px;line-height:15.4px;color:#ffffff;letter-spacing:-0.25px;">Propose changes</div>
<svg class="a" style="left:0;top:0" width="1617" height="1173"><circle cx="571" cy="696.5" r="17.3" fill="none" stroke="#f42a12" stroke-width="3.6" stroke-dasharray="13.2 8.54" stroke-dashoffset="10.84"/><path d="M892.0 829.0 L892.0 821.4 A17 17 0 0 1 909.0 804.4 L1047.6 804.4 A17 17 0 0 1 1064.6 821.4 L1064.6 836.5 A17 17 0 0 1 1047.6 853.5 L909.0 853.5 A17 17 0 0 1 892.0 836.5 Z" fill="none" stroke="#f42a12" stroke-width="3.5" stroke-dasharray="12.7 10.2" stroke-dashoffset="11.5"/><path d="M892.0 829.0 L892.0 821.4 A17 17 0 0 1 909.0 804.4 L1047.6 804.4 A17 17 0 0 1 1064.6 821.4 L1064.6 836.5 A17 17 0 0 1 1047.6 853.5 L909.0 853.5 A17 17 0 0 1 892.0 836.5 Z" fill="none" stroke="#f42a12" stroke-width="3.5" stroke-dasharray="11.4 392.8 10 0"/></svg>
</div>
<div id="win"></div>
</body></html>
